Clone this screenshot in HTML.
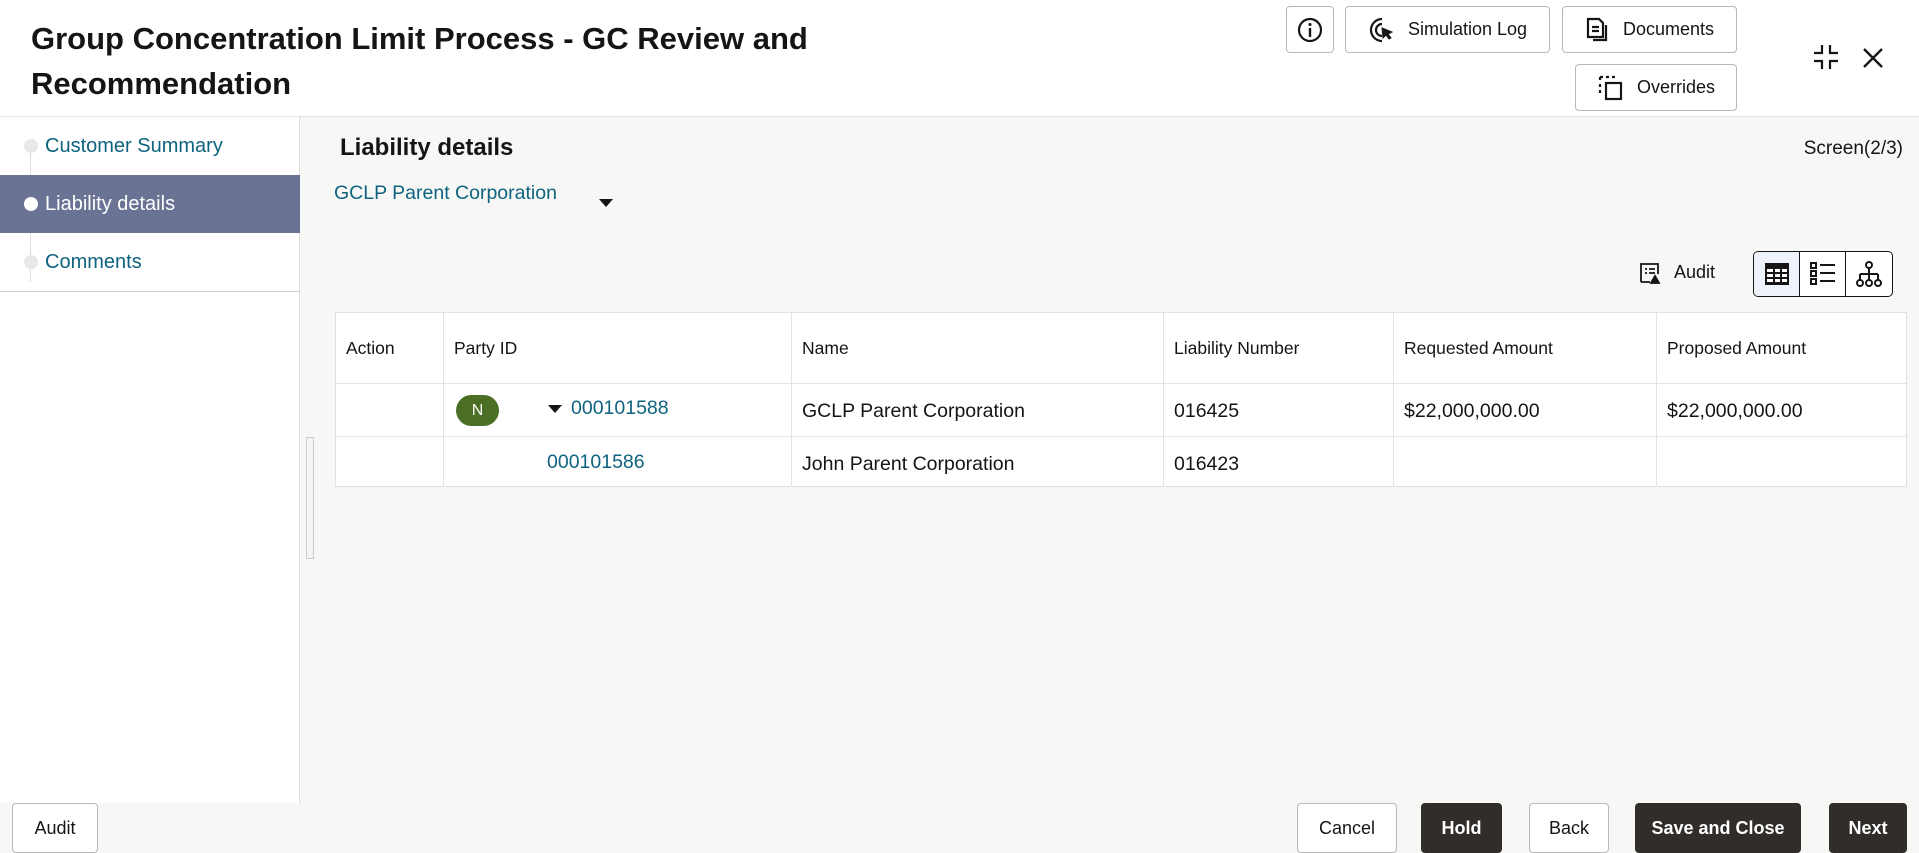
<!DOCTYPE html>
<html><head><meta charset="utf-8"><style>
*{box-sizing:border-box;margin:0;padding:0}
body{width:1919px;height:849px;overflow:hidden;background:#f7f7f6;font-family:"Liberation Sans",sans-serif;color:#161513;position:relative}
.hdr{position:absolute;left:0;top:0;width:1919px;height:117px;background:#fff;border-bottom:1px solid #e4e4e4}
.title{position:absolute;left:31px;top:16px;font-size:31px;font-weight:bold;line-height:45px;width:840px}
.btn{position:absolute;border:1px solid #b8b8b8;border-radius:4px;background:#fff;font-size:18px;display:flex;align-items:center;justify-content:center;gap:12px;color:#161513}
.side{position:absolute;left:0;top:117px;width:300px;height:686px;background:#fff;border-right:1px solid #ddd}
.item{position:absolute;left:0;width:300px;height:58px;font-size:20px;color:#0e6380;padding-left:45px;line-height:58px}
.dot{position:absolute;left:24px;top:22px;width:14px;height:14px;border-radius:50%;background:#e8e8e8}
.act{background:#6a7394;color:#fff}
.act .dot{background:#fff}
.tbl{position:absolute;left:335px;top:312px;width:1572px;height:175px;background:#fff;border:1px solid #e0e0e0}
.c{position:absolute;font-size:19.5px}
.h{position:absolute;font-size:17.5px;top:25px}
.vl{position:absolute;top:0;width:1px;height:174px;background:#e4e4e4}
.hl{position:absolute;left:0;width:1570px;height:1px;background:#e4e4e4}
.lnk{color:#0e6380}
.fb{position:absolute;top:803px;height:50px;border-radius:4px;font-size:18px;display:flex;align-items:center;justify-content:center}
.dk{background:#312d2a;color:#fff;font-weight:bold}
.lt{background:#fff;border:1px solid #b8b8b8;color:#161513}
</style></head><body>
<div class="hdr">
 <div class="title">Group Concentration Limit Process - GC Review and Recommendation</div>
 <div class="btn" style="left:1286px;top:6px;width:48px;height:47px"><svg width="28" height="28" viewBox="0 0 28 28"><circle cx="14" cy="14" r="11" fill="none" stroke="#161513" stroke-width="2.2"/><rect x="12.8" y="12" width="2.4" height="9" fill="#161513"/><circle cx="14" cy="8.5" r="1.5" fill="#161513"/></svg></div>
 <div class="btn" style="left:1345px;top:6px;width:205px;height:47px"><svg width="28" height="28" viewBox="0 0 28 28" fill="none" stroke="#161513" stroke-width="2.2"><path d="M14 3a11 11 0 1 0 0 22"/><path d="M14 8a6 6 0 1 0 0 12"/><path d="M14 12l10 4-4 2 3 4-2 1-3-4-3 3z" fill="#161513" stroke-width="1"/></svg>Simulation Log</div>
 <div class="btn" style="left:1562px;top:6px;width:175px;height:47px"><svg width="26" height="28" viewBox="0 0 26 28" fill="none" stroke="#161513" stroke-width="2.2"><path d="M3 3h11l4 4v14H3z"/><path d="M7 11h7M7 15h7"/><path d="M21 9v15H8"/></svg>Documents</div>
 <div class="btn" style="left:1575px;top:64px;width:162px;height:47px"><svg width="28" height="28" viewBox="0 0 28 28" fill="none" stroke="#161513" stroke-width="2.2"><path d="M3 3h3M9 3h3M15 3h3M3 3v3M3 10v3M3 16v3" /><rect x="9" y="9" width="15" height="16"/></svg>Overrides</div>
 <svg style="position:absolute;left:1812px;top:43px" width="28" height="28" viewBox="0 0 28 28" fill="none" stroke="#161513" stroke-width="2.2"><path d="M10 2v8H2M18 2v8h8M10 26v-8H2M18 26v-8h8"/></svg>
 <svg style="position:absolute;left:1862px;top:47px" width="22" height="22" viewBox="0 0 22 22" stroke="#161513" stroke-width="2.4"><path d="M2 2l18 18M20 2L2 20"/></svg>
</div>
<div class="side">
 <div style="position:absolute;left:30px;top:30px;width:1px;height:135px;background:#ddd"></div>
 <div class="item" style="top:0"><span class="dot"></span>Customer Summary</div>
 <div class="item act" style="top:58px"><span class="dot"></span>Liability details</div>
 <div class="item" style="top:116px"><span class="dot"></span>Comments</div>
 <div style="position:absolute;left:0;top:174px;width:300px;height:1px;background:#ccc"></div>
</div>
<div style="position:absolute;left:306px;top:437px;width:8px;height:122px;border:1px solid #ccc;background:#f4f4f4"></div>
<div style="position:absolute;left:340px;top:134px;font-size:24px;font-weight:bold">Liability details</div>
<div style="position:absolute;right:16px;top:138px;font-size:19px">Screen(2/3)</div>
<div class="lnk" style="position:absolute;left:334px;top:182px;font-size:19.5px">GCLP Parent Corporation</div>
<div style="position:absolute;left:599px;top:199px;border-left:7px solid transparent;border-right:7px solid transparent;border-top:8px solid #161513"></div>
<svg style="position:absolute;left:1638px;top:261px" width="24" height="24" viewBox="0 0 24 24" fill="none" stroke="#161513" stroke-width="1.8"><path d="M3 21V3h17v10M7 8h2M11 8h6M7 12h2M11 12h6M3 21h9"/><path d="M17 15l4 7h-8z" fill="#161513"/></svg>
<div style="position:absolute;left:1674px;top:262px;font-size:18px">Audit</div>
<div style="position:absolute;left:1753px;top:251px;width:140px;height:46px;border:1px solid #161513;border-radius:5px;background:#fff;display:flex;overflow:hidden">
 <div style="width:46px;background:#eef3fb;border-right:1px solid #161513;display:flex;align-items:center;justify-content:center"><svg width="26" height="24" viewBox="0 0 26 24"><rect x="1" y="1" width="24" height="22" fill="#161513"/><g fill="#fff"><rect x="3" y="7" width="6" height="3"/><rect x="11" y="7" width="5" height="3"/><rect x="18" y="7" width="5" height="3"/><rect x="3" y="12" width="6" height="3"/><rect x="11" y="12" width="5" height="3"/><rect x="18" y="12" width="5" height="3"/><rect x="3" y="17" width="6" height="3"/><rect x="11" y="17" width="5" height="3"/><rect x="18" y="17" width="5" height="3"/></g></svg></div>
 <div style="width:46px;border-right:1px solid #161513;display:flex;align-items:center;justify-content:center"><svg width="28" height="26" viewBox="0 0 28 26" fill="none" stroke="#161513" stroke-width="2"><rect x="2" y="2" width="5" height="5"/><rect x="2" y="10" width="5" height="5"/><rect x="2" y="18" width="5" height="5"/><path d="M11 4h15M11 12h15M11 20h15"/></svg></div>
 <div style="flex:1;display:flex;align-items:center;justify-content:center"><svg width="28" height="28" viewBox="0 0 28 28" fill="none" stroke="#161513" stroke-width="2"><circle cx="14" cy="5" r="3"/><path d="M14 8v6M5 14h18M5 14v6M14 14v6M23 14v6"/><circle cx="5" cy="23" r="3"/><circle cx="14" cy="23" r="3"/><circle cx="23" cy="23" r="3"/></svg></div>
</div>
<div class="tbl">
 <div class="vl" style="left:107px"></div><div class="vl" style="left:455px"></div><div class="vl" style="left:827px"></div><div class="vl" style="left:1057px"></div><div class="vl" style="left:1320px"></div>
 <div class="hl" style="top:70px"></div><div class="hl" style="top:123px"></div>
 <div class="h" style="left:10px">Action</div><div class="h" style="left:118px">Party ID</div><div class="h" style="left:466px">Name</div><div class="h" style="left:838px">Liability Number</div><div class="h" style="left:1068px">Requested Amount</div><div class="h" style="left:1331px">Proposed Amount</div>
 <div style="position:absolute;left:120px;top:82px;width:43px;height:31px;border-radius:16px;background:#4b6e25;color:#fff;font-size:16px;text-align:center;line-height:31px">N</div>
 <div style="position:absolute;left:212px;top:92px;border-left:7px solid transparent;border-right:7px solid transparent;border-top:8px solid #161513"></div>
 <div class="c lnk" style="left:235px;top:84px">000101588</div>
 <div class="c" style="left:466px;top:87px">GCLP Parent Corporation</div>
 <div class="c" style="left:838px;top:87px">016425</div>
 <div class="c" style="left:1068px;top:87px">$22,000,000.00</div>
 <div class="c" style="left:1331px;top:87px">$22,000,000.00</div>
 <div class="c lnk" style="left:211px;top:138px">000101586</div>
 <div class="c" style="left:466px;top:140px">John Parent Corporation</div>
 <div class="c" style="left:838px;top:140px">016423</div>
</div>
<div class="fb lt" style="left:12px;width:86px">Audit</div>
<div class="fb lt" style="left:1297px;width:100px">Cancel</div>
<div class="fb dk" style="left:1421px;width:81px">Hold</div>
<div class="fb lt" style="left:1529px;width:80px">Back</div>
<div class="fb dk" style="left:1635px;width:166px">Save and Close</div>
<div class="fb dk" style="left:1829px;width:78px">Next</div>
</body></html>
